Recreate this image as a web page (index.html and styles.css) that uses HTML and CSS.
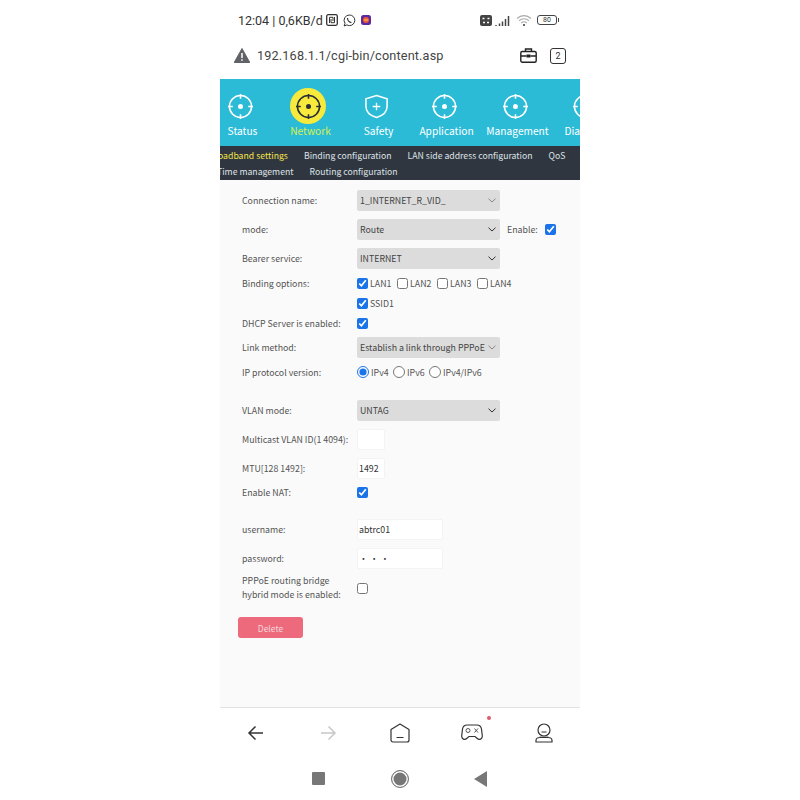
FILE: index.html
```html
<!DOCTYPE html>
<html lang="en">
<head>
    <meta charset="UTF-8">
    <meta name="viewport" content="width=device-width, initial-scale=1.0">
    <title>Router settings</title>
    <link rel="stylesheet" href="styles.css">
</head>
<body>
    <svg class="defs" width="0" height="0">
        <symbol id="target" viewBox="0 0 26 26">
            <path d="M13 1.500a11.500 11.500 0 0 1 11.500 11.500M24.500 13a11.500 11.500 0 0 1-11.500 11.500M13 24.500a11.500 11.500 0 0 1-11.500-11.500M1.500 13a11.500 11.500 0 0 1 11.500-11.500" fill="none" stroke="currentColor" stroke-width="1.600"/>
            <path d="M13 0v5M13 21v5M0 13h5M21 13h5" fill="none" stroke="currentColor" stroke-width="1.600"/>
            <circle cx="13" cy="13" r="2.600" fill="currentColor"/>
        </symbol>
        <symbol id="chevron" viewBox="0 0 8 5">
            <path d="M.5.700 4 4 7.500.700" fill="none" stroke="currentColor"/>
        </symbol>
    </svg>

    <div class="phone">
        <!-- status bar -->
        <div class="status">
            <span class="time">12:04 | 0,6KB/d</span>
            <svg class="st-n" width="12" height="12" viewBox="0 0 12 12"><rect x=".7" y=".7" width="10.600" height="10.600" rx="1.500" fill="none" stroke="#333" stroke-width="1.300"/><path d="M3.500 9V3.300H7V7M8.500 3v5.700H5V5" fill="none" stroke="#333"/></svg>
            <svg class="st-icon" width="13" height="13" viewBox="0 0 13 13"><path d="M6.500 1a5.300 5.300 0 0 1 0 10.600 5.400 5.400 0 0 1-2.600-.7L1.200 12l.8-2.700A5.300 5.300 0 0 1 6.500 1z" fill="none" stroke="#333"/><path d="M4.500 4c0 2.200 1.800 4.300 4 4.500" fill="none" stroke="#333" stroke-width="1.200"/></svg>
            <svg class="st-icon" width="10" height="10" viewBox="0 0 10 10"><rect width="10" height="10" rx="2.500" fill="#5b2a9c"/><circle cx="5" cy="5" r="3" fill="#ee5a3a"/><path d="M3 5h4" stroke="#f6c945"/></svg>
            <span class="spacer"></span>
            <svg width="12" height="11" viewBox="0 0 12 11"><rect width="12" height="11" rx="2" fill="#444"/><path d="M2.500 3.500h2M7.500 3.500h2M3 7.500h2M7 7.500h2" stroke="#fff" stroke-width="1.500"/></svg>
            <svg class="bars" width="16" height="11" viewBox="0 0 16 11"><path d="M1 10v1M4.500 8.500V11M7.500 6.500V11M10.500 4V11M13.500 1v10" stroke="#444" stroke-width="1.500"/></svg>
            <svg class="wifi" width="16" height="12" viewBox="0 0 16 12"><path d="M1 4.500a10 10 0 0 1 14 0M3 6.800a7 7 0 0 1 10 0M5.200 9a4 4 0 0 1 5.600 0" fill="none" stroke="#aaa" stroke-width="1.100"/><circle cx="8" cy="11" r="1" fill="#333"/></svg>
            <span class="battery">80</span>
        </div>

        <!-- address bar -->
        <div class="address">
            <svg class="warn" width="16" height="15" viewBox="0 0 16 15"><path d="M8 .5 15.800 14.500H.2z" fill="#5f6368" stroke="#5f6368" stroke-linejoin="round"/><path d="M8 5v5M8 11.200v1.500" stroke="#fff" stroke-width="1.500"/></svg>
            <span class="url">192.168.1.1/cgi-bin/content.asp</span>
            <svg class="case" width="17" height="15" viewBox="0 0 17 15"><rect x=".8" y="3.500" width="15.400" height="10.700" rx="1.500" fill="none" stroke="#222" stroke-width="1.400"/><path d="M5.500 3.500V1h6v2.500M1 8h5.500M10.500 8H16" fill="none" stroke="#222" stroke-width="1.400"/><rect x="6.500" y="6.500" width="4" height="3" fill="#222"/></svg>
            <span class="tabs">2</span>
        </div>

        <!-- router page -->
        <nav class="topnav">
            <div class="nav-item">
                <svg class="nav-icon"><use href="#target"/></svg>
                <span>Status</span>
            </div>
            <div class="nav-item active">
                <span class="nav-disc"><svg class="nav-icon"><use href="#target"/></svg></span>
                <span>Network</span>
            </div>
            <div class="nav-item">
                <svg class="nav-icon" viewBox="0 0 26 26"><path d="M13 1.500 24 5v8c0 5.500-4.500 9.500-11 11.500C6.500 22.500 2 18.500 2 13V5z" fill="none" stroke="currentColor" stroke-width="1.600"/><path d="M13 9v8M9 13h8" stroke="currentColor" stroke-width="1.400"/></svg>
                <span>Safety</span>
            </div>
            <div class="nav-item">
                <svg class="nav-icon"><use href="#target"/></svg>
                <span>Application</span>
            </div>
            <div class="nav-item">
                <svg class="nav-icon"><use href="#target"/></svg>
                <span>Management</span>
            </div>
            <div class="nav-item">
                <svg class="nav-icon"><use href="#target"/></svg>
                <span>Diagnosis</span>
            </div>
        </nav>

        <div class="subnav">
            <div class="sub-row first">
                <span class="current">Broadband settings</span>
                <span>Binding configuration</span>
                <span>LAN side address configuration</span>
                <span>QoS</span>
            </div>
            <div class="sub-row second">
                <span>Time management</span>
                <span>Routing configuration</span>
            </div>
        </div>

        <form class="content">
            <div class="row h21 gap8">
                <label>Connection name:</label>
                <div class="select faint"><span>1_INTERNET_R_VID_</span><svg class="chev"><use href="#chevron"/></svg></div>
            </div>
            <div class="row h21 gap8">
                <label>mode:</label>
                <div class="select"><span>Route</span><svg class="chev"><use href="#chevron"/></svg></div>
                <label class="enable">Enable:</label>
                <input type="checkbox" checked>
            </div>
            <div class="row h21 gap4">
                <label>Bearer service:</label>
                <div class="select"><span>INTERNET</span><svg class="chev"><use href="#chevron"/></svg></div>
            </div>
            <div class="row h20">
                <label>Binding options:</label>
                <div class="opts">
                    <input type="checkbox" checked><span class="opt-w">LAN1</span>
                    <input type="checkbox"><span class="opt-w">LAN2</span>
                    <input type="checkbox"><span class="opt-w">LAN3</span>
                    <input type="checkbox"><span>LAN4</span>
                </div>
            </div>
            <div class="row h20">
                <label></label>
                <div class="opts"><input type="checkbox" checked><span>SSID1</span></div>
            </div>
            <div class="row h20 gap4">
                <label>DHCP Server is enabled:</label>
                <input type="checkbox" checked>
            </div>
            <div class="row h21 gap4">
                <label>Link method:</label>
                <div class="select"><span>Establish a link through PPPoE</span><svg class="chev faint-chev"><use href="#chevron"/></svg></div>
            </div>
            <div class="row h20 gap17">
                <label>IP protocol version:</label>
                <div class="opts">
                    <input type="radio" name="ipver" checked><span class="rad-w">IPv4</span>
                    <input type="radio" name="ipver"><span class="rad-w">IPv6</span>
                    <input type="radio" name="ipver"><span>IPv4/IPv6</span>
                </div>
            </div>
            <div class="row h21 gap7">
                <label>VLAN mode:</label>
                <div class="select"><span>UNTAG</span><svg class="chev"><use href="#chevron"/></svg></div>
            </div>
            <div class="row h22 gap8">
                <label>Multicast VLAN ID(1 4094):</label>
                <input class="text small" type="text">
            </div>
            <div class="row h21 gap3">
                <label>MTU[128 1492]:</label>
                <input class="text small" type="text" value="1492">
            </div>
            <div class="row h20 gap16">
                <label>Enable NAT:</label>
                <input type="checkbox" checked>
            </div>
            <div class="row h22 gap7">
                <label>username:</label>
                <input class="text wide" type="text" value="abtrc01">
            </div>
            <div class="row h22 gap5">
                <label>password:</label>
                <input class="text wide dots" type="text" value="• • •">
            </div>
            <div class="row two gap15">
                <label>PPPoE routing bridge<br>hybrid mode is enabled:</label>
                <input type="checkbox">
            </div>
            <button class="delete" type="button">Delete</button>
        </form>

        <!-- browser toolbar -->
        <div class="toolbar">
            <svg width="18" height="16" viewBox="0 0 18 16"><path d="M16 8H2M8.500 1.500 2 8l6.500 6.500" fill="none" stroke="#333" stroke-width="1.500"/></svg>
            <svg width="18" height="16" viewBox="0 0 18 16"><path d="M2 8h14M9.500 1.500 16 8l-6.500 6.500" fill="none" stroke="#c8c8c8" stroke-width="1.500"/></svg>
            <svg width="20" height="20" viewBox="0 0 20 20"><path d="M1 6.500 10 1l9 5.500V17a2 2 0 0 1-2 2H3a2 2 0 0 1-2-2z" fill="none" stroke="#333" stroke-width="1.200" stroke-linejoin="round"/><path d="M6.500 14.500h7" stroke="#333"/></svg>
            <span class="game">
                <svg width="22" height="18" viewBox="0 0 22 18"><path d="M6 1h10c2.500 0 4 1.500 4.500 4l.8 7c.2 3-3 4.500-5 2.500L14 12.500H8L5.700 14.500c-2 2-5.200.5-5-2.500l.8-7C2 2.500 3.500 1 6 1z" fill="none" stroke="#333" stroke-width="1.200"/><circle cx="7" cy="6.500" r="2" fill="none" stroke="#555"/><path d="M13.500 4.500l3.500 4M17 4.500l-3.500 4" stroke="#555"/></svg>
                <i class="red-dot"></i>
            </span>
            <svg width="18" height="20" viewBox="0 0 18 20"><circle cx="9" cy="7" r="6" fill="none" stroke="#333" stroke-width="1.200"/><path d="M6.500 9h5M1 19v-1.500C1 15.500 3 14.500 5 14.500h8c2 0 4 1 4 3V19zM4.500 14c1.500.5 7.500.5 9 0" fill="none" stroke="#333" stroke-width="1.200"/></svg>
        </div>

        <!-- android keys -->
        <div class="android">
            <span class="key-square"></span>
            <span class="key-circle"></span>
            <svg class="key-back" width="13" height="16" viewBox="0 0 13 16"><path d="M13 0v16L0 8z" fill="#777"/></svg>
        </div>
    </div>
</body>
</html>
```
FILE: styles.css
```css
* { box-sizing: border-box; }
body { margin: 0; background: #fff; font-family: "Noto Sans CJK SC", "Noto Sans", sans-serif; }
.defs { position: absolute; }
.phone { width: 360px; height: 800px; margin: 0 auto; display: flex; flex-direction: column; }

.status { height: 40px; padding: 0 23px 0 18px; display: flex; align-items: center; color: #333; }
.time { font-family: Roboto, sans-serif; font-size: 12.500px; }
.st-n { margin-left: 3px; }
.st-icon { margin-left: 5px; }
.spacer { flex: 1; }
.bars { margin-left: 3px; }
.wifi { margin-left: 5px; }
.battery { position: relative; margin-left: 5px; width: 20px; height: 10px; border: 1px solid #444; border-radius: 3px; font: 7px/8px Roboto, sans-serif; text-align: center; color: #333; }
.battery::after { content: ""; position: absolute; top: 2px; right: -3px; width: 1px; height: 4px; background: #444; }

.address { height: 39px; padding: 0 14px 8px; display: flex; align-items: center; }
.warn { margin-right: 7px; }
.url { font-family: Roboto, sans-serif; font-size: 12.700px; color: #444; flex: 1; letter-spacing: .15px; }
.case { margin-right: 13px; }
.tabs { width: 16px; height: 16px; border: 1.200px solid #333; border-radius: 3px; font: 9px/14px Roboto, sans-serif; text-align: center; color: #333; }

.topnav { height: 67px; background: #2bbbd6; display: flex; overflow: hidden; color: #fff; }
.nav-item { flex: 0 0 68px; height: 67px; display: flex; flex-direction: column; align-items: center; position: relative; font-size: 10.200px; }
.nav-item:first-child { margin-left: -14px; }
.nav-item:nth-child(5) { margin-left: 3px; }
.nav-item:last-child { margin-left: 2px; }
.nav-item > span:last-child { position: absolute; top: 44px; left: 2.500px; width: 68px; text-align: center; white-space: nowrap; }
.nav-icon { width: 25px; height: 25px; margin-top: 14.500px; }
.nav-item.active > span:last-child { color: #d6f04e; }
.nav-disc { width: 36px; height: 36px; margin-top: 9px; border-radius: 50%; background: #f7ea3c; color: #2a2f36; display: flex; align-items: center; justify-content: center; }
.nav-disc .nav-icon { margin-top: 0; }

.subnav { height: 34px; background: #2f3640; color: #dfe3e6; font-size: 8.700px; overflow: hidden; padding-top: 2px; }
.sub-row { display: flex; gap: 16px; height: 16px; line-height: 16px; white-space: nowrap; }
.first { margin-left: -11px; }
.second { margin-left: -3px; }
.current { color: #f4e54a; }

.content { flex: 1; background: #fafafa; border-bottom: 1px solid #e2e2e2; padding: 10px 0 0 18px; color: #555; font-size: 8.800px; }
.row { display: flex; align-items: center; }
.row label { width: 119px; padding: 0 0 0 4px; flex: none; white-space: nowrap; }
.h20 { height: 20px; }
.h21 { height: 21px; }
.h22 { height: 22px; }
.two { height: 28px; line-height: 14px; }
.gap3 { margin-bottom: 3px; }
.gap4 { margin-bottom: 4px; }
.gap7 { margin-bottom: 7px; }
.gap5 { margin-bottom: 5px; }
.gap8 { margin-bottom: 8px; }
.gap15 { margin-bottom: 15px; }
.gap16 { margin-bottom: 16px; }
.gap17 { margin-bottom: 18px; }

.select { width: 143px; height: 21px; background: #dcdcdc; border-radius: 2px; padding: 0 4px 0 3px; color: #444; display: flex; align-items: center; justify-content: space-between; white-space: nowrap; }
.chev { width: 8px; height: 5px; color: #333; }
.faint .chev, .faint-chev { color: #888; }
.row label.enable { width: auto; padding-left: 7px; margin-right: 7px; }

input[type=checkbox], input[type=radio] { width: 11px; height: 11px; margin: 0; accent-color: #1a73e8; flex: none; }
.opts { display: flex; align-items: center; }
.opts span { margin-left: 2px; }
.opt-w { width: 27px; }
.rad-w { width: 22px; }
.row input[type=radio] { width: 12px; height: 12px; }

.text { height: 21px; border: 1px solid #f3f3f3; border-radius: 2px; background: #fff; padding: 0 1px; font-family: inherit; font-size: 8.800px; color: #333; outline: none; }
.small { width: 28px; }
.wide { width: 86px; }

.delete { width: 65px; height: 21px; display: block; padding: 0; border: none; border-radius: 3px; background: #ec6a7c; color: #f6d5da; font-family: inherit; font-size: 8.500px; }

.toolbar { height: 49px; display: grid; grid-template-columns: repeat(5, 72px); align-items: center; justify-items: center; }
.game { position: relative; display: flex; }
.red-dot { position: absolute; top: -8px; right: -8px; width: 4px; height: 4px; border-radius: 50%; background: #dd5b6a; }

.android { height: 43px; display: grid; grid-template-columns: repeat(3, 81px); justify-content: center; align-items: center; justify-items: center; }
.key-square { width: 13px; height: 13px; margin-right: 2px; border-radius: 1px; background: #777; }
.key-circle { width: 18px; height: 18px; border: 1.500px solid #777; border-radius: 50%; background: #777; box-shadow: inset 0 0 0 1.500px #fff; }
.key-back { margin-right: 2px; }
```
